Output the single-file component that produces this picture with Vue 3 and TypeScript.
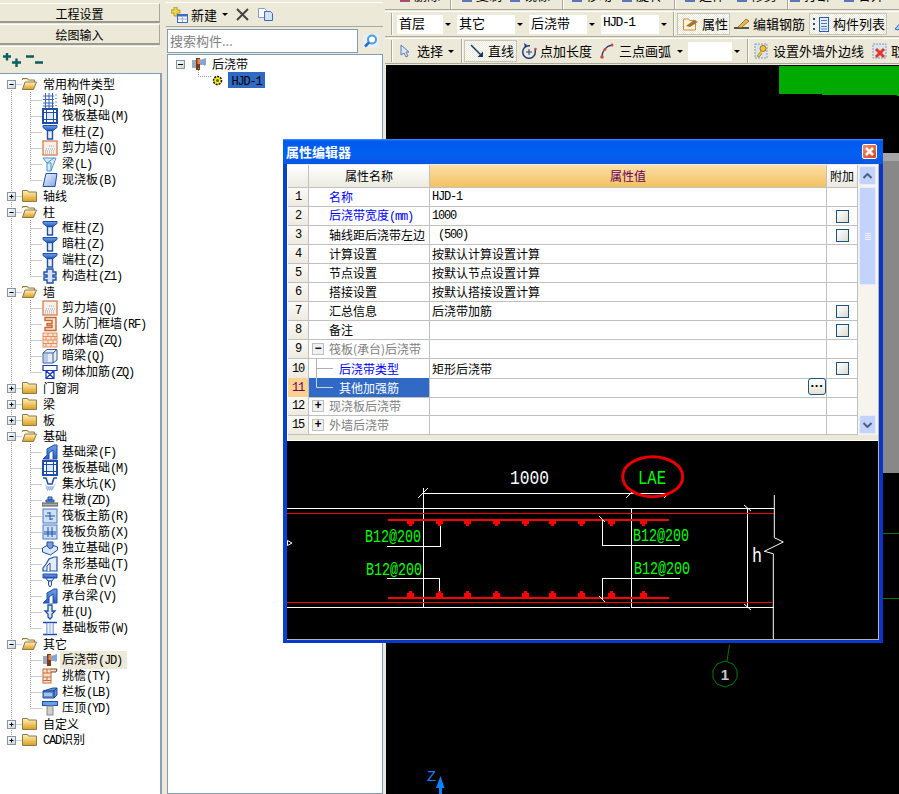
<script setup lang="ts">
type Child = { text: string; code: string; icon: string; selected?: boolean }
type Group = { label: string; latin?: string; children?: Child[]; open?: boolean }

const groups: Group[] = [
  { label: '常用构件类型', open: true, children: [
    { text: '轴网', code: '(J)', icon: 'grid' },
    { text: '筏板基础', code: '(M)', icon: 'raft' },
    { text: '框柱', code: '(Z)', icon: 'column' },
    { text: '剪力墙', code: '(Q)', icon: 'wall' },
    { text: '梁', code: '(L)', icon: 'beam' },
    { text: '现浇板', code: '(B)', icon: 'slab' },
  ] },
  { label: '轴线' },
  { label: '柱', open: true, children: [
    { text: '框柱', code: '(Z)', icon: 'column' },
    { text: '暗柱', code: '(Z)', icon: 'column' },
    { text: '端柱', code: '(Z)', icon: 'column' },
    { text: '构造柱', code: '(Z1)', icon: 'tiecol' },
  ] },
  { label: '墙', open: true, children: [
    { text: '剪力墙', code: '(Q)', icon: 'wall' },
    { text: '人防门框墙', code: '(RF)', icon: 'door' },
    { text: '砌体墙', code: '(ZQ)', icon: 'brick' },
    { text: '暗梁', code: '(Q)', icon: 'box' },
    { text: '砌体加筋', code: '(ZQ)', icon: 'rebar' },
  ] },
  { label: '门窗洞' },
  { label: '梁' },
  { label: '板' },
  { label: '基础', open: true, children: [
    { text: '基础梁', code: '(F)', icon: 'footbeam' },
    { text: '筏板基础', code: '(M)', icon: 'raft' },
    { text: '集水坑', code: '(K)', icon: 'pit' },
    { text: '柱墩', code: '(ZD)', icon: 'pier' },
    { text: '筏板主筋', code: '(R)', icon: 'main' },
    { text: '筏板负筋', code: '(X)', icon: 'neg' },
    { text: '独立基础', code: '(P)', icon: 'iso' },
    { text: '条形基础', code: '(T)', icon: 'strip' },
    { text: '桩承台', code: '(V)', icon: 'cap' },
    { text: '承台梁', code: '(V)', icon: 'footbeam' },
    { text: '桩', code: '(U)', icon: 'pile' },
    { text: '基础板带', code: '(W)', icon: 'band' },
  ] },
  { label: '其它', open: true, children: [
    { text: '后浇带', code: '(JD)', icon: 'jd', selected: true },
    { text: '挑檐', code: '(TY)', icon: 'eave' },
    { text: '栏板', code: '(LB)', icon: 'rail' },
    { text: '压顶', code: '(YD)', icon: 'coping' },
  ] },
  { label: '自定义' },
  { label: '', latin: 'CAD', children: undefined },
]

const blue = '#1d4fa8'
const icons: Record<string, string> = {
  grid: `<path d="M1 4h11M1 7.5h11M1 11h11M1 14h11M3.5 1v15M7 1v15M10.5 1v15" stroke="#3b66b8" fill="none"/><path d="M13 3h2M13 6.5h2M13 10h2M13 13.5h2" stroke="#7f9bd2"/>`,
  raft: `<rect x="1" y="1" width="14" height="14" fill="#fff" stroke="${blue}" stroke-width="2"/><rect x="4.5" y="4.5" width="7" height="7" fill="#dfe8f6" stroke="${blue}"/><path d="M4.5 1v14M11.5 1v14M1 4.5h14M1 11.5h14" stroke="${blue}"/>`,
  column: `<path d="M1 1.500h14v2l-4 3H5l-4-3z" fill="url(#gblue)" stroke="${blue}"/><path d="M5.500 6.500h5V15h-5z" fill="#e8effa" stroke="${blue}" stroke-width="1.400"/>`,
  wall: `<rect x="1" y="1" width="14" height="14" fill="#f6f1ea" stroke="#d9855c" stroke-width="1.400"/><path d="M4 9h9M3 11h10M3 13h10M7 6h6" stroke="#a4a4a4" stroke-dasharray="1 1"/>`,
  beam: `<path d="M1 2h13l-2 5-3 8H5V7z" fill="#d8ecfa" stroke="#4f94c8"/><path d="M5 7l7-5M5 7h4v8" fill="none" stroke="#4f94c8"/>`,
  slab: `<path d="M4 1.500h11L13 14.500H1z" fill="url(#gblue2)" stroke="${blue}"/>`,
  tiecol: `<path d="M5 1h6v3h3v3h-3v2h3v3h-3v3H5v-3H2V9h3V7H2V4h3z" fill="#d8e4f6" stroke="${blue}" stroke-width="1.400"/>`,
  door: `<path d="M3 1.500h11v13H3v-3h7v-2H5v-2h5v-3H3z" fill="#f6e6d8" stroke="#c76830" stroke-width="1.400"/>`,
  brick: `<rect x="1" y="1" width="14" height="14" fill="#fbe3cf" stroke="#e39060"/><path d="M1 4.500h14M1 8h14M1 11.500h14M6 1v3.500M11 1v3.500M4 4.500V8M9 4.500V8M13 4.500V8M6 8v3.500M11 8v3.500M4 11.500V15M9 11.500V15" stroke="#e39060" fill="none"/>`,
  box: `<path d="M1 5l4-3.500h10V12l-4 3H1z" fill="#e4ecf7" stroke="#3a5a8c"/><path d="M1 5h10v10M11 5l4-3.500" fill="none" stroke="#3a5a8c"/><rect x="2" y="6" width="4" height="8" fill="#b7cbe6"/>`,
  rebar: `<path d="M1 1.500h14v5H1zM4 6.500v8h8v-8M4 14.500L12 6.500M4 6.500l8 8" fill="none" stroke="#1538b8" stroke-width="1.200"/>`,
  footbeam: `<path d="M1 15l4-4V5l7-4h3v14z" fill="url(#gblue)" stroke="${blue}"/><path d="M7 15v-6l4-3v9" fill="#fff" stroke="${blue}"/>`,
  pit: `<path d="M1 2h3l2 6h4l2-6h3" fill="none" stroke="${blue}" stroke-width="1.500"/><path d="M2 7l3 7h6l3-7-3 3H5z" fill="#bcd0ea"/><path d="M4 12h8M5 14h6" stroke="#7d9ad0" stroke-dasharray="1 1"/>`,
  pier: `<path d="M6 5h4v3H6zM4 8h8v2H4z" fill="#7f9bd2" stroke="${blue}"/><rect x="0" y="11" width="16" height="3" fill="#b0b0b0" stroke="#555"/>`,
  main: `<rect x="1" y="1" width="14" height="14" fill="#cfe0f6" stroke="#4a78c0"/><path d="M3 8h10M8 4v8M5 5h3M8 11h3" stroke="#1d4fa8" fill="none"/>`,
  neg: `<rect x="1" y="1" width="14" height="14" fill="#cfe0f6" stroke="#4a78c0"/><path d="M2 8h12M2 10h12M6 3v10M10 3v10" stroke="#1d4fa8" fill="none"/>`,
  iso: `<path d="M.500 8l7-4 8 3v3l-7 5-8-3z" fill="#dbe6f6" stroke="${blue}"/><path d="M5 6V2h6v5l-3 2z" fill="#7f9bd2" stroke="${blue}"/>`,
  strip: `<path d="M1 15v-3l3-4 3-5 5-2h3v14z" fill="#e4ecf7" stroke="${blue}" stroke-width="1.200"/><path d="M5 15v-5l3-3v8" fill="#fff" stroke="${blue}"/>`,
  cap: `<path d="M1 2h14v4H1z" fill="url(#gblue)" stroke="${blue}"/><path d="M4 6h8l-2 3H6z" fill="#e8effa" stroke="${blue}"/><path d="M6.500 9h3v4l-1.500 2-1.500-2z" fill="#e8effa" stroke="${blue}"/>`,
  pile: `<path d="M6 1h4v6h3l-3 3v3l-2 2-2-2v-3L3 7h3z" fill="#dbe6f6" stroke="${blue}" stroke-width="1.300"/>`,
  band: `<path d="M1 2.500h14M1 14.500h14" stroke="${blue}" stroke-width="1.500"/><path d="M5 3v11M8 3v11M11 3v11" stroke="#3b66b8"/><rect x="5" y="3" width="6" height="11" fill="#dbe6f6" opacity=".6"/>`,
  jd: `<rect x="1" y="4" width="5" height="8" fill="#9aa8c0"/><rect x="5" y="2" width="4" height="12" fill="#7a3a18"/><rect x="6.500" y="3" width="3" height="5" fill="#e88b3a"/><path d="M9 4l6-2v7l-6 3z" fill="#8aa4d8"/><rect x="9" y="9" width="4" height="4" fill="#fff"/>`,
  eave: `<rect x="1" y="1" width="8" height="14" fill="#fbe3cf" stroke="#c76830"/><path d="M1 5h8M1 9h8M1 12.500h8M5 1v4M5 9v3.500" stroke="#c76830"/><path d="M9 1h6l-1 3H9" fill="#f6e0c8" stroke="#6a4a2a"/>`,
  rail: `<path d="M1 7l10-3h4v7l-3 3H1z" fill="#5f8fd0" stroke="${blue}"/><path d="M1 7h11v7M12 7l3-3" fill="none" stroke="#173a78"/><rect x="2" y="9" width="8" height="3" fill="#a9c3e8"/>`,
  coping: `<rect x=".500" y="1.500" width="15" height="4" fill="#5fa4e8" stroke="${blue}"/><rect x="5" y="6" width="6" height="9" fill="#cfcfcf" stroke="#888"/>`,
}

const treeRows = groups.flatMap((g, gi) => {
  const isLast = gi === groups.length - 1
  const head = { kind: 'group' as const, key: `g${gi}`, group: g, last: isLast, first: gi === 0 }
  const kids = (g.children ?? []).map((c, ci, arr) => ({
    kind: 'child' as const,
    key: `c${gi}-${ci}`,
    item: c,
    lastChild: ci === arr.length - 1,
  }))
  return [head, ...kids]
})

type PropRow = {
  no: string
  name: string
  unit?: string
  value?: string
  latinValue?: string
  check?: boolean
  tone?: 'link' | 'muted'
  toggle?: '+' | '-'
  branch?: 'mid' | 'end'
  current?: boolean
  more?: boolean
}

const propRows: PropRow[] = [
  { no: '1', name: '名称', latinValue: 'HJD-1', tone: 'link' },
  { no: '2', name: '后浇带宽度', unit: '(mm)', latinValue: '1000', tone: 'link', check: true },
  { no: '3', name: '轴线距后浇带左边', latinValue: ' (500)', check: true },
  { no: '4', name: '计算设置', value: '按默认计算设置计算' },
  { no: '5', name: '节点设置', value: '按默认节点设置计算' },
  { no: '6', name: '搭接设置', value: '按默认搭接设置计算' },
  { no: '7', name: '汇总信息', value: '后浇带加筋', check: true },
  { no: '8', name: '备注', check: true },
  { no: '9', name: '筏板(承台)后浇带', tone: 'muted', toggle: '-' },
  { no: '10', name: '后浇带类型', value: '矩形后浇带', tone: 'link', branch: 'mid', check: true },
  { no: '11', name: '其他加强筋', branch: 'end', current: true, more: true },
  { no: '12', name: '现浇板后浇带', tone: 'muted', toggle: '+' },
  { no: '15', name: '外墙后浇带', tone: 'muted', toggle: '+' },
]

const dots = [410, 439, 467, 496, 525, 552, 581, 611, 643]
</script>

<template>
  <div class="app">
    <svg class="defs" width="0" height="0" aria-hidden="true">
      <defs>
        <linearGradient id="gblue" x1="0" y1="0" x2="0" y2="1"><stop offset="0" stop-color="#6f9fe8" /><stop offset="1" stop-color="#2a5ec0" /></linearGradient>
        <linearGradient id="gblue2" x1="0" y1="0" x2="1" y2="1"><stop offset="0" stop-color="#f2f6fd" /><stop offset="1" stop-color="#7fa4e0" /></linearGradient>
        <linearGradient id="gfold" x1="0" y1="0" x2="0" y2="1"><stop offset="0" stop-color="#fff3b8" /><stop offset="1" stop-color="#dc9c1c" /></linearGradient>
        <linearGradient id="gbox" x1="0" y1="0" x2="1" y2="1"><stop offset="0" stop-color="#fff" /><stop offset="1" stop-color="#d4d0c0" /></linearGradient>
      </defs>
    </svg>

    <!-- left: component types -->
    <aside class="types">
      <div class="nav-btn">工程设置</div>
      <div class="nav-btn">绘图输入</div>
      <div class="types-bar">
        <svg width="18" height="14" viewBox="0 0 18 14"><path d="M0 3.500h8M4 0v7.500M9 9.500h9M13.500 5.500v8.500" stroke="#075f5f" stroke-width="2.400" /></svg>
        <svg width="17" height="14" viewBox="0 0 17 14"><path d="M0 3.500h8M9 9.500h8" stroke="#075f5f" stroke-width="2.400" /></svg>
      </div>
      <div class="types-tree">
        <div v-for="row in treeRows" :key="row.key" class="tree-row">
          <template v-if="row.kind === 'group'">
            <svg class="guide" width="22" height="16" viewBox="0 0 22 16">
              <path :d="`M11.500 ${row.first ? 8 : 0}V${row.last ? 8 : 16}M11.500 8.500H22`" class="dots" />
              <rect x="7.500" y="4.500" width="8" height="8" fill="url(#gbox)" stroke="#7a96b4" />
              <path d="M9.500 8.500h4" stroke="#000" />
              <path v-if="!row.group.open" d="M11.500 6.500v4" stroke="#000" />
            </svg>
            <svg class="folder" width="15" height="14" viewBox="0 0 15 14">
              <template v-if="row.group.open">
                <path d="M.5 3V1.500h5l1 1.500h6v2" fill="#f5e6b0" stroke="#8a7a50" />
                <path d="M.5 12.500L3 5h11.500l-3 7.500z" fill="url(#gfold)" stroke="#8a7a50" />
              </template>
              <path v-else d="M.5 12.500V1.500h5l1 1.500h8v9.500z" fill="url(#gfold)" stroke="#8a7a50" />
            </svg>
            <span class="label"><span v-if="row.group.latin" class="latin">{{ row.group.latin }}</span>{{ row.group.latin ? '识别' : row.group.label }}</span>
          </template>
          <template v-else>
            <svg class="guide" width="42" height="16" viewBox="0 0 42 16">
              <path :d="`M11.500 0V16M30.500 0V${row.lastChild ? 8 : 16}M30.500 8.500H42`" class="dots" />
            </svg>
            <svg class="item-icon" width="16" height="16" viewBox="0 0 16 16" v-html="icons[row.item.icon]"></svg>
            <span class="label child" :class="{ picked: row.item.selected }">{{ row.item.text }}<span class="latin">{{ row.item.code }}</span></span>
          </template>
        </div>
      </div>
    </aside>

    <!-- middle: components of the type -->
    <section class="parts">
      <div class="parts-bar">
        <svg class="new-icon" width="17" height="16" viewBox="0 0 17 16">
          <path d="M3 0h3v3h3v3H6v3H3V6H0V3h3z" fill="#f2d64a" stroke="#a08a20" stroke-width=".8" />
          <rect x="6.500" y="7.500" width="10" height="8" fill="#fff" stroke="#3b6cc0" />
          <path d="M7 8.500h9" stroke="#3b6cc0" stroke-width="2" /><path d="M7 12h9M11.500 10v5" stroke="#8fb0e0" />
        </svg>
        <span class="bar-text">新建</span>
        <i class="caret"></i>
        <svg class="x-icon" width="13" height="13" viewBox="0 0 13 13"><path d="M1 1l11 11M12 1L1 12" stroke="#444" stroke-width="2" /></svg>
        <svg class="copy-icon" width="15" height="13" viewBox="0 0 15 13">
          <path d="M.5.5h6l2 2v7h-8z" fill="#fff" stroke="#7b9ed4" />
          <path d="M6.500 3.500h6l2 2v7h-8z" fill="#d4e2f8" stroke="#3b6cc0" />
        </svg>
      </div>
      <div class="search-row">
        <div class="search-box">搜索构件...</div>
        <svg class="search-btn" width="16" height="14" viewBox="0 0 16 14">
          <rect width="16" height="14" fill="#e6eef8" />
          <circle cx="9" cy="5.500" r="4" fill="#fff" stroke="#4d9be0" stroke-width="2" />
          <path d="M6 8.500l-4 4" stroke="#2a6cc0" stroke-width="2.500" />
        </svg>
      </div>
      <div class="parts-tree">
        <div class="part-row top">
          <svg width="9" height="9" viewBox="0 0 9 9"><rect x=".5" y=".5" width="8" height="8" fill="url(#gbox)" stroke="#7a96b4" /><path d="M2 4.500h5" stroke="#000" /></svg>
          <svg class="jd-icon" width="16" height="16" viewBox="0 0 16 16" v-html="icons.jd"></svg>
          <span class="label">后浇带</span>
        </div>
        <div class="part-row sub">
          <svg class="part-link" width="14" height="16" viewBox="0 0 14 16"><path d="M.5 0v8.500H14" class="dots" /></svg>
          <svg width="11" height="11" viewBox="0 0 11 11"><circle cx="5.500" cy="5.500" r="4" fill="#f8ee20" stroke="#111" stroke-width="1.500" stroke-dasharray="2 1" /><circle cx="5.500" cy="5.500" r="1.500" fill="#6a5a08" /></svg>
          <span class="part-name"><span class="latin">HJD-1</span></span>
        </div>
      </div>
    </section>

    <!-- right: toolbars and drawing canvas -->
    <main class="work">
      <div class="tb tb-cut">
        <span class="cut-item a"><i class="cut-ico rose"></i>删除</span><i class="tb-sep cut-a"></i>
        <span class="cut-item b"><i class="cut-ico"></i>复制</span>
        <span class="cut-item c"><i class="cut-ico"></i>镜像</span><i class="tb-sep cut-b"></i>
        <span class="cut-item d"><i class="cut-ico"></i>移动</span>
        <span class="cut-item e"><i class="cut-ico"></i>旋转</span><i class="tb-sep cut-c"></i>
        <span class="cut-item f"><i class="cut-ico"></i>延伸</span>
        <span class="cut-item g"><i class="cut-ico"></i>修剪</span><i class="tb-sep cut-d"></i>
        <span class="cut-item h"><i class="cut-ico"></i>打断</span>
        <span class="cut-item i"><i class="cut-ico"></i>合并</span>
      </div>

      <div class="tb">
        <i class="grip"></i>
        <div class="combos">
          <div class="combo w56"><span>首层</span><b><i class="caret"></i></b></div>
          <div class="combo w68"><span>其它</span><b><i class="caret"></i></b></div>
          <div class="combo w68"><span>后浇带</span><b><i class="caret"></i></b></div>
          <div class="combo w68"><span class="latin big">HJD-1</span><b><i class="caret"></i></b></div>
        </div>
        <i class="tb-sep sep-first"></i>
        <div class="tool on prop-btn">
          <svg width="16" height="14" viewBox="0 0 16 14"><path d="M.5 13V2h5l1 1.500h6V13z" fill="#fff2d8" stroke="#d88a3a" /><path d="M3 9l8-6 4 2-8 5z" fill="#9a7a3a" /></svg>
          <span>属性</span>
        </div>
        <div class="tool rebar-btn">
          <svg width="18" height="14" viewBox="0 0 18 14"><path d="M1 11h15" stroke="#222" stroke-width="1.500" /><path d="M5 10l8-8 3 2-8 7z" fill="#e8b84a" stroke="#7a5a1a" stroke-width=".7" /></svg>
          <span>编辑钢筋</span>
        </div>
        <div class="tool on list-btn">
          <svg width="17" height="15" viewBox="0 0 17 15"><path d="M1 2h2M1 7h2M1 12h2" stroke="#2a4a8c" stroke-width="2" /><rect x="7.500" y=".5" width="9" height="14" fill="#e4ecf8" stroke="#2a5ea8" /><path d="M9 3.500h6M9 6.500h6M9 9.500h6M9 12h6" stroke="#4a78c0" /></svg>
          <span>构件列表</span>
        </div>
        <svg class="pen-tail" width="14" height="14" viewBox="0 0 14 14"><path d="M2 12l8-9 3 2-8 8z" fill="#bcd0f0" stroke="#2a5ec0" /></svg>
      </div>

      <div class="tb tb-draw">
        <i class="grip"></i>
        <div class="tool select-btn">
          <svg width="10" height="14" viewBox="0 0 10 14"><path d="M1 1v10l3-2 2 4 2-1-2-4h3z" fill="#dbe6f6" stroke="#5a7ab0" /></svg>
          <span>选择</span>
        </div>
        <i class="caret cap-sel"></i>
        <i class="tb-sep sep-sel"></i>
        <div class="tool on line-btn">
          <svg width="14" height="14" viewBox="0 0 14 14"><path d="M1 1l11 11" stroke="#15356a" stroke-width="1.500" /><path d="M13 13H7.500L13 7.500z" fill="#15356a" /></svg>
          <span>直线</span>
        </div>
        <div class="tool len-btn">
          <svg width="16" height="16" viewBox="0 0 16 16"><circle cx="8" cy="9" r="6.300" fill="none" stroke="#1d3f80" stroke-width="1.500" stroke-dasharray="30 6" /><path d="M5 9h6M8 6v6" stroke="#1d3f80" /><circle cx="14.500" cy="6" r="1.300" fill="#d84a3a" /><path d="M3 0l3 2-2 3z" fill="#1d3f80" /></svg>
          <span>点加长度</span>
        </div>
        <div class="tool arc-btn">
          <svg width="14" height="16" viewBox="0 0 14 16"><path d="M2 14C2 8 6 3 12 2" fill="none" stroke="#1d3f80" stroke-width="1.300" /><circle cx="2" cy="14" r="1.800" fill="#d84a3a" /><circle cx="5" cy="6.500" r="1.400" fill="#d84a3a" /><circle cx="12" cy="2" r="1.500" fill="#d84a3a" /></svg>
          <span>三点画弧</span>
        </div>
        <i class="caret cap-arc"></i>
        <div class="combo w54 draw-combo"><span></span><b><i class="caret"></i></b></div>
        <i class="tb-sep sep-combo"></i>
        <div class="tool wall-btn">
          <svg width="14" height="16" viewBox="0 0 14 16"><rect x="1" y="1" width="12" height="14" fill="#dbe3ef" stroke="#8a9ab0" stroke-dasharray="2 1" /><circle cx="9" cy="5.500" r="3" fill="#f2c23a" stroke="#a07a10" /><path d="M7 8l-4 5 2 1 1-1 1-1 1-2" fill="#f2c23a" stroke="#a07a10" stroke-width=".7" /></svg>
          <span>设置外墙外边线</span>
        </div>
        <div class="tool cancel-btn">
          <svg width="15" height="16" viewBox="0 0 15 16"><rect x="1" y="1" width="13" height="14" fill="#dbe3ef" stroke="#8a9ab0" stroke-dasharray="2 1" /><path d="M4 6l8 8M12 6l-8 8" stroke="#e03a2a" stroke-width="3" /></svg>
          <span>取消</span>
        </div>
      </div>

      <div class="canvas">
        <svg class="canvas-art" width="513" height="730" viewBox="386 64 513 730">
          <g shape-rendering="crispEdges">
            <rect x="779" y="65" width="43" height="28" fill="#00aa00" />
            <rect x="822" y="65" width="75" height="29" fill="#00aa00" />
            <rect x="897" y="65" width="2" height="30" fill="#00aa00" />
            <rect x="883" y="160" width="16" height="312" fill="#888" />
            <rect x="883" y="152" width="16" height="8" fill="#a6a6a6" />
            <path d="M883 532.500h16M883 597.500h16" stroke="#007a00" />
          </g>
          <path d="M729.500 644L727 660" stroke="#007a00" fill="none" />
          <polygon points="725,660 733,663 737,669 737,677 733,683 725,686 717,683 713,677 713,669 717,663" fill="none" stroke="#007a00" />
          <text x="725" y="679" class="cad-num">1</text>
          <text x="427" y="780" class="cad-z" textLength="9" lengthAdjust="spacingAndGlyphs">Z</text>
          <path d="M440.500 775l4 12h-2.500v7h-3v-7H436z" fill="#0a84ff" />
        </svg>
      </div>
    </main>

    <!-- floating property editor -->
    <div class="dialog">
      <div class="dlg-title">
        <span>属性编辑器</span>
        <div class="dlg-close"><svg width="11" height="11" viewBox="0 0 11 11"><path d="M2 2l7 7M9 2L2 9" stroke="#fff" stroke-width="2.500" /></svg></div>
      </div>
      <div class="dlg-body">
        <div class="dlg-grid">
          <div class="prop-table">
            <div class="prop-row head">
              <div class="cell num"></div>
              <div class="cell hname">属性名称</div>
              <div class="cell hvalue">属性值</div>
              <div class="cell hextra">附加</div>
            </div>
            <div v-for="r in propRows" :key="r.no" class="prop-row">
              <div class="cell num" :class="{ active: r.current }"><span class="latin">{{ r.no }}</span></div>
              <div class="cell name" :class="[r.tone, { current: r.current, branch: r.branch }]">
                <span v-if="r.toggle" class="pm">{{ r.toggle === '+' ? '+' : '−' }}</span>
                <svg v-if="r.branch" class="branch-line" width="26" height="19" viewBox="0 0 26 19">
                  <path :d="r.branch === 'end' ? 'M4.500 0v9.500H21' : 'M4.500 0v19M4.500 9.500H21'" fill="none" :stroke="r.current ? '#c8d4ea' : '#b0b0b0'" />
                </svg>
                <span>{{ r.name }}<span v-if="r.unit" class="latin">{{ r.unit }}</span></span>
              </div>
              <div class="cell val">
                <span v-if="r.latinValue" class="latin keep">{{ r.latinValue }}</span>
                <span v-else>{{ r.value }}</span>
                <span v-if="r.more" class="more">···</span>
              </div>
              <div class="cell extra"><i v-if="r.check" class="check"></i></div>
            </div>
          </div>
          <div class="vscroll">
            <div class="sb-btn"><svg width="9" height="6" viewBox="0 0 9 6"><path d="M.5 5l4-4 4 4" fill="none" stroke="#4d6185" stroke-width="2" /></svg></div>
            <div class="sb-thumb"><i></i><i></i><i></i><i></i></div>
            <div class="sb-rest"></div>
            <div class="sb-btn"><svg width="9" height="6" viewBox="0 0 9 6"><path d="M.5 1l4 4 4-4" fill="none" stroke="#4d6185" stroke-width="2" /></svg></div>
          </div>
        </div>
        <div class="dlg-strip"></div>
        <svg class="preview" width="591" height="198" viewBox="287 441 591 198">
          <g shape-rendering="crispEdges" stroke-width="1" fill="none">
            <path d="M287 508.500H774M287 607.500H630M632 607.500H774" stroke="#fff" />
            <path d="M423.500 488V608M631.500 508V608M747.500 508V608" stroke="#fff" />
            <path d="M424 493.500H669" stroke="#fff" />
            <path d="M287 513.500H774M287 602.500H772" stroke="#f00" />
            <path d="M388 519.500H669M388 597.500H669" stroke="#f00" stroke-width="2" />
            <path d="M440.500 522V546.500H387M439.500 595V578.500H387M602.500 520V545.500H680M602.500 600V578.500H680" stroke="#fff" />
          </g>
          <path d="M418 498l10-10M626 498l7-7M664 498l7-7M599 516l6 6M599 596l6 6M744 505l7 6M744 604l7 6" stroke="#fff" fill="none" />
          <g fill="#f00" shape-rendering="crispEdges">
            <g v-for="x in dots" :key="x">
              <rect :x="x - 3" y="520" width="7" height="4" /><rect :x="x - 1" y="519" width="3" height="7" />
              <rect :x="x - 3" y="593" width="7" height="4" /><rect :x="x - 1" y="591" width="3" height="7" />
            </g>
          </g>
          <path d="M774.300 495V537.700L783.300 542L764.300 551.300L773.300 553.700V639" stroke="#fff" fill="none" />
          <path d="M287.500 540.500l4.500 2.500-4.500 2.500z" stroke="#fff" fill="none" />
          <text x="510" y="484" class="cad white" textLength="39" lengthAdjust="spacingAndGlyphs">1000</text>
          <text x="638" y="484" class="cad green" textLength="28" lengthAdjust="spacingAndGlyphs">LAE</text>
          <text x="365" y="542" class="cad rebar-t" textLength="56" lengthAdjust="spacingAndGlyphs">B12@200</text>
          <text x="366" y="575" class="cad rebar-t" textLength="56" lengthAdjust="spacingAndGlyphs">B12@200</text>
          <text x="633" y="541" class="cad rebar-t" textLength="56" lengthAdjust="spacingAndGlyphs">B12@200</text>
          <text x="634" y="574" class="cad rebar-t" textLength="56" lengthAdjust="spacingAndGlyphs">B12@200</text>
          <text x="752" y="562" class="cad white" textLength="10" lengthAdjust="spacingAndGlyphs">h</text>
          <ellipse cx="652.700" cy="476.700" rx="30" ry="20" fill="none" stroke="#e80000" stroke-width="3" />
        </svg>
      </div>
    </div>
  </div>
</template>

<style>
html, body { margin: 0; background: #000; }
</style>

<style scoped>
.app {
  position: relative;
  display: flex;
  width: 899px;
  height: 794px;
  overflow: hidden;
  background: #ece9d8;
  font: 12px/16px "Noto Sans CJK SC", sans-serif;
  color: #000;
}
.defs { position: absolute; }
i { display: block; font-style: normal; }
.latin { font-family: "Liberation Mono", monospace; font-size: 12px; letter-spacing: -1.2px; }
.latin.big { font-size: 13px; letter-spacing: -1.5px; }
.latin.keep { white-space: pre; }

/* left column */
.types { display: flex; flex-direction: column; flex: none; width: 162px; margin-right: 4px; padding-top: 3px; box-sizing: border-box; }
.nav-btn {
  height: 20px;
  margin-bottom: 1px;
  width: 160px;
  box-sizing: border-box;
  text-align: center;
  line-height: 19px;
  background: #ece9d8;
  border-top: 1px solid #fff;
  border-bottom: 2px solid #9c9a8c;
  border-right: 1px solid #aca899;
}
.nav-btn + .nav-btn { height: 21px; }
.types-bar { display: flex; gap: 5px; align-items: center; height: 27px; padding-left: 3px; width: 157px; border-top: 1px solid #fff; box-sizing: border-box; }
.types-tree { flex: 1; padding-top: 2px; background: #fff; border-top: 1px solid #7f9db9; border-right: 2px solid #8e9fb4; }
.tree-row { display: flex; align-items: center; height: 16px; white-space: nowrap; }
.guide { flex: none; }
.dots { fill: none; stroke: #9a9a9a; stroke-dasharray: 1 1; }
.folder { flex: none; margin-right: 6px; }
.item-icon { flex: none; margin-right: 2px; }
.label { line-height: 16px; }
.child { padding: 0 5px 0 2px; }
.picked { background: #ece9d8; }

/* middle column */
.parts { display: flex; flex-direction: column; flex: none; width: 217px; margin-right: 2px; padding-top: 2px; box-sizing: border-box; }
.parts-bar { display: flex; align-items: center; height: 25px; padding-left: 5px; border-top: 1px solid #fff; border-bottom: 1px solid #aca899; box-sizing: border-box; }
.bar-text { margin-left: 3px; font-size: 13px; }
.caret { width: 0; height: 0; border: 3px solid transparent; border-top: 3px solid #000; border-bottom: 0; }
.parts-bar .caret { margin-left: 5px; }
.x-icon { margin-left: 8px; }
.copy-icon { margin-left: 9px; }
.search-row { display: flex; align-items: center; height: 27px; padding-left: 1px; }
.search-box {
  width: 191px;
  height: 24px;
  box-sizing: border-box;
  border: 1px solid #7f9db9;
  background: #fff;
  color: #808080;
  font-size: 13px;
  line-height: 21px;
  padding-left: 2px;
}
.search-btn { margin-left: 5px; }
.parts-tree { flex: 1; margin-left: 1px; background: #fff; border: 1px solid #7f9db9; }
.part-row { display: flex; align-items: center; height: 16px; }
.part-row.top { margin-top: 1px; padding-left: 8px; }
.jd-icon { margin: 0 5px 0 6px; }
.part-row.sub { padding-left: 30px; }
.part-link { margin-top: -8px; }
.part-name { margin-left: 5px; height: 16px; width: 37px; background: #316ac5; text-align: center; }

/* toolbars */
.work { display: flex; flex-direction: column; flex: 1; min-width: 0; }
.tb {
  display: flex;
  align-items: center;
  flex: none;
  height: 26px;
  margin-bottom: 1px;
  padding-left: 6px;
  box-sizing: border-box;
  border-top: 1px solid #fff;
  border-bottom: 1px solid #aca899;
  overflow: hidden;
  white-space: nowrap;
  font-size: 13px;
}
.tb > * { flex: none; }
.tb-cut { position: relative; height: 10px; border-top: 0; padding-left: 0; }
.cut-item { position: absolute; top: -13px; display: flex; align-items: center; gap: 4px; line-height: 15px; }
.cut-ico { width: 10px; height: 15px; background: #5a78b8; }
.cut-ico.rose { background: #a84a78; }
.a { left: 15px; } .b { left: 77px; } .c { left: 125px; } .d { left: 187px; } .e { left: 237px; } .f { left: 300px; } .g { left: 352px; } .h { left: 405px; } .i { left: 459px; }
.tb-sep { width: 0; height: 100%; border-left: 1px solid #aca899; border-right: 1px solid #fff; }
.tb-cut .tb-sep { position: absolute; top: 0; }
.cut-a { left: 65px; } .cut-b { left: 177px; } .cut-c { left: 289px; } .cut-d { left: 402px; }
.grip { width: 0; height: 22px; margin-right: 4px; border-left: 1px solid #aca899; border-right: 1px solid #fff; }
.combos { display: flex; gap: 4px; }
.combo { display: flex; justify-content: space-between; height: 19px; padding-left: 2px; box-sizing: border-box; background: #fff; line-height: 15px; }
.combo b { display: flex; align-items: center; justify-content: center; width: 10px; background: #ece9d8; }
.w56 { width: 56px; } .w68 { width: 68px; } .w54 { width: 54px; }
.sep-first { margin: 0 2px 0 4px; }
.tool { display: flex; align-items: center; height: 22px; box-sizing: border-box; }
.on {
  background: repeating-conic-gradient(#fff 0 25%, #ece9d8 0 50%) 0 0 / 2px 2px;
  border: 1px solid #c9c6b4;
}
.prop-btn { width: 53px; padding-left: 5px; gap: 3px; }
.rebar-btn { width: 73px; margin-left: 3px; gap: 2px; }
.list-btn { width: 78px; margin-left: 3px; padding-left: 2px; gap: 4px; }
.pen-tail { margin-left: 6px; }
.select-btn { padding-left: 3px; gap: 7px; }
.cap-sel { margin-left: 5px; }
.sep-sel { margin: 0 1px 0 7px; }
.line-btn { width: 53px; padding-left: 5px; gap: 4px; }
.len-btn { margin-left: 4px; gap: 3px; }
.arc-btn { margin-left: 8px; gap: 5px; }
.cap-arc { margin-left: 6px; }
.draw-combo { margin-left: 5px; }
.sep-combo { margin-left: 5px; }
.wall-btn { margin-left: 5px; gap: 5px; }
.cancel-btn { margin-left: 8px; gap: 4px; }
.canvas { position: relative; flex: 1; margin-left: 1px; background: #000; }
.canvas-art { position: absolute; inset: 0; }
.cad-num { font: 15px "Liberation Sans", sans-serif; fill: #c8c8c8; text-anchor: middle; font-weight: 700; }
.cad-z { font: 14px "Liberation Mono", monospace; fill: #0a84ff; }

/* dialog */
.dialog {
  position: absolute;
  left: 283px;
  top: 139px;
  z-index: 2;
  display: flex;
  flex-direction: column;
  width: 600px;
  height: 504px;
  box-sizing: border-box;
  background: #0838c8;
  border-left: 4px solid #0a40d0;
  border-right: 4px solid #0836c8;
  border-bottom: 3px solid #0a38c8;
}
.dlg-title {
  display: flex;
  align-items: center;
  justify-content: space-between;
  flex: none;
  height: 25px;
  margin: 0 -4px;
  padding: 0 6px 0 3px;
  background: linear-gradient(#3d95ff 0, #0058ee 2px, #0060f0 60%, #0a56e4 100%);
  color: #fff;
  font-weight: 700;
  font-size: 13px;
}
.dlg-close {
  display: flex;
  align-items: center;
  justify-content: center;
  width: 15px;
  height: 15px;
  box-sizing: border-box;
  border: 1px solid #fff;
  border-radius: 2px;
  background: linear-gradient(135deg, #ef9070, #d8431c);
}
.dlg-body {
  display: flex;
  flex-direction: column;
  flex: 1;
  min-height: 0;
  background: #ece9d8;
  border-top: 1px solid #e8e8f0;
  border-left: 1px solid #fff;
  border-right: 1px solid #b4b4ac;
  border-bottom: 1px solid #b4b4ac;
}
.dlg-grid { display: flex; flex: none; height: 270px; background: #fff; }
.prop-table { flex: none; width: 570px; }
.prop-row { display: grid; grid-template-columns: 21px 121px 397px 31px; height: 19px; }
.prop-row.head { height: 23px; }
.cell { display: flex; align-items: center; box-sizing: border-box; min-width: 0; border-right: 1px solid #c0c0c0; border-bottom: 1px solid #c0c0c0; white-space: nowrap; }
.num { justify-content: center; background: linear-gradient(#fbfaf6, #eeeadf); }
.num.active { background: #fdd28e; color: #660066; }
.head .num, .hname, .hextra { background: linear-gradient(#fff, #ecebe0); }
.hname, .hvalue, .hextra { justify-content: center; }
.hvalue { background: linear-gradient(#fbdfa3, #f3c262); color: #660066; }
.name { padding-left: 20px; }
.name.link { color: #0000ff; }
.name.muted { color: #808080; padding-left: 3px; }
.name.branch { padding-left: 3px; }
.name.current { background: #316ac5; color: #fff; }
.branch-line { flex: none; margin-right: 1px; }
.pm {
  display: flex;
  align-items: center;
  justify-content: center;
  flex: none;
  box-sizing: border-box;
  width: 12px;
  height: 12px;
  margin-right: 5px;
  border: 1px solid #c0c0c0;
  background: #f0f0f0;
  color: #000;
  font: 700 12px/10px "Liberation Mono", monospace;
}
.val { position: relative; padding-left: 2px; }
.more {
  position: absolute;
  right: 0;
  top: 0;
  width: 16px;
  height: 15px;
  border: 1px solid #1c5180;
  border-radius: 3px;
  background: linear-gradient(#fff, #e6e2d4);
  text-align: center;
  font: 700 13px/13px "Liberation Sans", sans-serif;
}
.extra { justify-content: center; }
.check { width: 13px; height: 13px; box-sizing: border-box; border: 1px solid #1c5180; background: linear-gradient(135deg, #fff, #dcdcd4); }
.vscroll { display: flex; flex-direction: column; flex: 1; padding: 1px 2px 1px 1px; background: #f6f4ec; gap: 2px; }
.sb-btn {
  display: flex;
  align-items: center;
  justify-content: center;
  flex: none;
  height: 17px;
  border: 1px solid #e4ecfb;
  border-radius: 2px;
  background: #c3d3fd;
}
.sb-thumb {
  display: flex;
  flex-direction: column;
  align-items: center;
  justify-content: center;
  gap: 1px;
  flex: none;
  height: 98px;
  box-sizing: border-box;
  border: 1px solid #e4ecfb;
  border-radius: 2px;
  background: #c3d3fd;
}
.sb-thumb i { width: 6px; height: 1px; background: #eef2ff; }
.sb-rest { flex: 1; }
.dlg-strip { flex: none; height: 6px; border-bottom: 1px solid #fff; box-sizing: border-box; }
.preview { display: block; flex: none; margin-left: -1px; background: #000; }
.cad { font-family: "Liberation Mono", monospace; font-size: 21px; }
.white { fill: #fff; }
.green { fill: #0f0; }
.rebar-t { fill: #0f0; font-size: 18px; }
</style>
